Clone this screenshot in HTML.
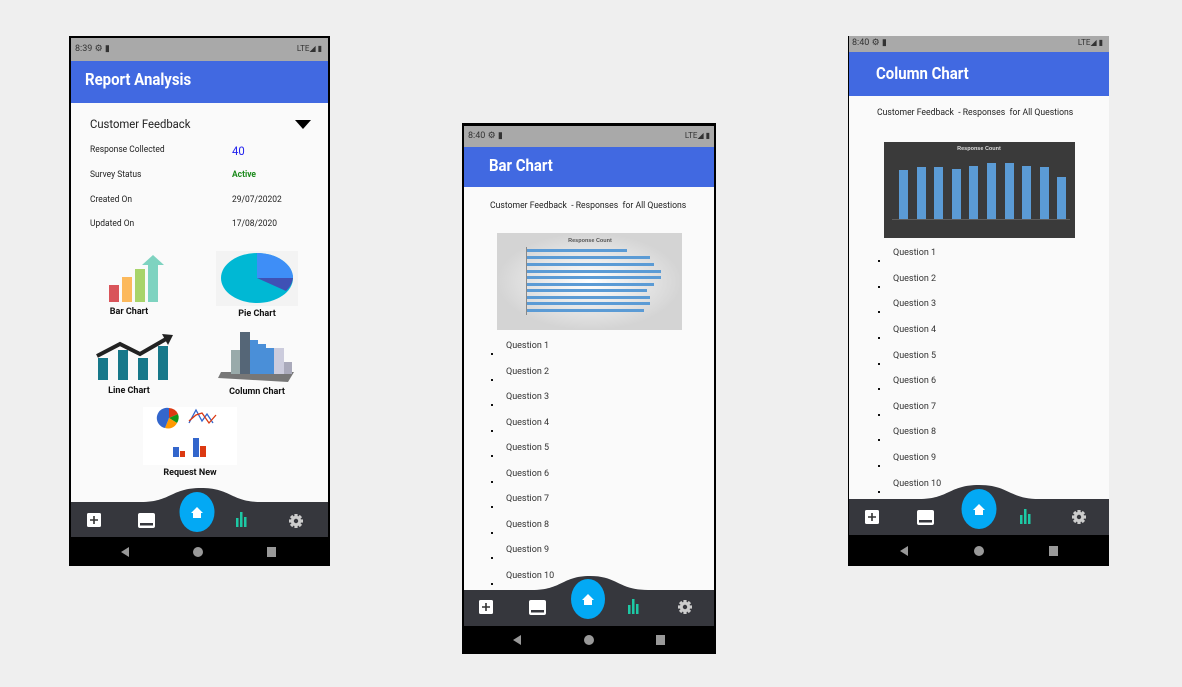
<!DOCTYPE html>
<html><head><meta charset="utf-8"><style>
*{margin:0;padding:0;box-sizing:border-box}
body{width:1182px;height:687px;background:#efefef;position:relative;overflow:hidden;font-family:"Roboto","Liberation Sans",sans-serif}
.ph{position:absolute;background:#fafafa;overflow:hidden}
.a{position:absolute}
.st{position:absolute;left:0;right:0;background:#a9a9a9;color:#333;font-size:9px}
.hd{position:absolute;left:0;right:0;background:#4169e1;color:#fff;font-weight:bold;font-size:17px}
.hd span{display:inline-block;transform:scaleX(0.88);transform-origin:left}
.sys{position:absolute;left:0;right:0;bottom:0;background:#000}
.t{position:absolute;font-size:9px;color:#222;white-space:nowrap;transform:scaleX(0.94);transform-origin:left}
.q{position:absolute;font-size:9px;color:#333;white-space:nowrap}
.q:before{content:"";position:absolute;left:-15px;top:12px;width:2px;height:2px;background:#111}
.lbl{position:absolute;font-size:9px;font-weight:bold;color:#111;transform:translateX(-50%);white-space:nowrap}
</style></head><body>

<svg width="0" height="0" style="position:absolute"><defs>
<g id="gear"><g fill="#ccc"><rect x="-1.6" y="-7" width="3.2" height="14"/><rect x="-1.6" y="-7" width="3.2" height="14" transform="rotate(45)"/><rect x="-1.6" y="-7" width="3.2" height="14" transform="rotate(90)"/><rect x="-1.6" y="-7" width="3.2" height="14" transform="rotate(135)"/></g><circle r="5.2" fill="#ccc"/><circle r="2.2" fill="#36373d"/></g>
</defs></svg>

<!-- Phone 1 -->
<div class="ph" style="left:69px;top:36px;width:261px;height:530px;border:2px solid #000;border-bottom:none;">
 <div class="st" style="top:0;height:23px;"><span class="a" style="left:4px;top:6px">8:39 ⚙ ▮</span><span class="a" style="right:6px;top:6px;font-size:8px">LTE◢ ▮</span></div>
 <div class="hd" style="top:23px;height:42px;padding:9px 0 0 14px;"><span>Report Analysis</span></div>
 <div class="t" style="left:19px;top:79px;font-size:12px;color:#222">Customer Feedback</div>
 <div class="a" style="left:224px;top:82px;width:0;height:0;border-left:8px solid transparent;border-right:8px solid transparent;border-top:9px solid #000"></div>
 <div class="t" style="left:19px;top:107px">Response Collected</div><div class="t" style="left:161px;top:106px;color:#2222ee;font-size:12px">40</div>
 <div class="t" style="left:19px;top:132px">Survey Status</div><div class="t" style="left:161px;top:132px;color:#1a8a1a;font-weight:bold">Active</div>
 <div class="t" style="left:19px;top:157px">Created On</div><div class="t" style="left:161px;top:157px">29/07/20202</div>
 <div class="t" style="left:19px;top:181px">Updated On</div><div class="t" style="left:161px;top:181px">17/08/2020</div>
 <svg class="a" style="left:36px;top:217px" width="66" height="48"><rect x="2" y="30" width="10" height="17" fill="#d9545a"/><rect x="15" y="22" width="10" height="25" fill="#fcb95c"/><rect x="28" y="14" width="10" height="33" fill="#a8d46a"/><rect x="41" y="10" width="10" height="37" fill="#7ed3c0"/><polygon points="35,10 46,0 57,10" fill="#7ed3c0"/></svg>
 <div class="lbl" style="left:58px;top:269px">Bar Chart</div>
 <svg class="a" style="left:145px;top:213px" width="82" height="55"><rect width="82" height="55" fill="#f3f3f3"/><ellipse cx="41" cy="27" rx="36" ry="25" fill="#00b8d4"/><path d="M41 27 L41 2 A36 25 0 0 1 77 27 Z" fill="#3e8ef7"/><path d="M41 27 L77 27 A36 25 0 0 1 70 40 Z" fill="#3f51b5"/></svg>
 <div class="lbl" style="left:186px;top:271px">Pie Chart</div>
 <svg class="a" style="left:25px;top:296px" width="78" height="48"><rect x="2" y="24" width="10" height="22" fill="#17788a"/><rect x="22" y="16" width="10" height="30" fill="#17788a"/><rect x="42" y="24" width="10" height="22" fill="#17788a"/><rect x="62" y="12" width="10" height="34" fill="#17788a"/><polyline points="1,22 24,10 44,20 70,5" fill="none" stroke="#222" stroke-width="4"/><polygon points="66,0 77,1 72,11" fill="#222"/></svg>
 <div class="lbl" style="left:58px;top:348px">Line Chart</div>
 <svg class="a" style="left:145px;top:292px" width="82" height="55"><polygon points="5,42 78,42 72,52 2,48" fill="#777"/><rect x="15" y="20" width="10" height="24" fill="#9aa"/><rect x="24" y="2" width="10" height="42" fill="#567"/><rect x="34" y="10" width="8" height="34" fill="#4a8fd8"/><rect x="42" y="14" width="8" height="30" fill="#4a8fd8"/><rect x="50" y="18" width="8" height="26" fill="#4a8fd8"/><rect x="58" y="18" width="10" height="26" fill="#ccd"/><rect x="68" y="32" width="8" height="12" fill="#aab"/></svg>
 <div class="lbl" style="left:186px;top:349px">Column Chart</div>
 <svg class="a" style="left:72px;top:369px" width="94" height="58"><rect width="94" height="58" fill="#fff"/><path d="M26 11 L26 1 A10 10 0 0 1 35 7 Z" fill="#dc3912"/><path d="M26 11 L35 7 A10 10 0 0 1 34 16 Z" fill="#109618"/><path d="M26 11 L34 16 A10 10 0 0 1 22 21 Z" fill="#ff9900"/><path d="M26 11 L22 21 A10 10 0 0 1 26 1 Z" fill="#3366cc"/><polyline points="46,16 53,3 59,14 64,7 70,16" fill="none" stroke="#3366cc" stroke-width="1.3"/><polyline points="46,14 53,8 59,6 66,16 73,8" fill="none" stroke="#dc3912" stroke-width="1.3"/><rect x="30" y="40" width="6" height="10" fill="#3366cc"/><rect x="37" y="44" width="5" height="6" fill="#dc3912"/><rect x="50" y="31" width="6" height="19" fill="#3366cc"/><rect x="57" y="39" width="6" height="11" fill="#dc3912"/></svg>
 <div class="lbl" style="left:119px;top:430px">Request New</div>
 <svg class="a" style="left:0;top:450px" width="261" height="52"><path d="M70 14 C100 14 100 0 130 0 C160 0 160 14 190 14 L261 14 L261 52 L0 52 L0 14 Z" fill="#36373d"/><ellipse cx="126" cy="24" rx="17.5" ry="20" fill="#03a9f4"/><path d="M120 25 L126 19 L132 25 L130 25 L130 30 L122 30 L122 25Z" fill="#fff"/><rect x="16" y="25" width="14" height="14" rx="1.5" fill="#fff"/><path d="M23 28v8M19 32h8" stroke="#333" stroke-width="1.6"/><rect x="67" y="25" width="17" height="15" rx="2" fill="#fff"/><rect x="69" y="35" width="13" height="2.5" fill="#36373d"/><rect x="165" y="30" width="2.5" height="9" fill="#1dc9a5"/><rect x="169" y="24" width="2.5" height="15" fill="#1dc9a5"/><rect x="173" y="29" width="2.5" height="10" fill="#1dc9a5"/><use href="#gear" x="225" y="33"/></svg>
 <div class="sys" style="height:29px"><span class="a" style="left:50px;top:10px;width:0;height:0;border-top:5px solid transparent;border-bottom:5px solid transparent;border-right:8px solid #999"></span><span class="a" style="left:122px;top:10px;width:10px;height:10px;border-radius:50%;background:#999"></span><span class="a" style="left:196px;top:10px;width:9px;height:10px;background:#999"></span></div>
</div>

<!-- Phone 2 -->
<div class="ph" style="left:462px;top:123px;width:254px;height:531px;border:2px solid #000;border-top:3px solid #000;border-bottom:none;">
 <div class="st" style="top:0;height:21px;"><span class="a" style="left:4px;top:5px">8:40 ⚙ ▮</span><span class="a" style="right:4px;top:5px;font-size:8px">LTE◢ ▮</span></div>
 <div class="hd" style="top:21px;height:40px;padding:9px 0 0 25px;"><span>Bar Chart</span></div>
 <div class="t" style="left:26px;top:75px;transform:scaleX(0.96)">Customer Feedback &nbsp;- Responses &nbsp;for All Questions</div>
 <svg class="a" style="left:33px;top:107px" width="185" height="97"><defs><radialGradient id="g1"><stop offset="0" stop-color="#fff"/><stop offset="1" stop-color="#d4d4d4"/></radialGradient></defs><rect width="185" height="97" fill="url(#g1)"/><text x="93" y="9" font-size="5.5" font-weight="bold" text-anchor="middle" fill="#555" font-family="Liberation Sans">Response Count</text><g fill="#5b9bd5"><rect x="30" y="16" width="100" height="3"/><rect x="30" y="23" width="123" height="3"/><rect x="30" y="30" width="127" height="3"/><rect x="30" y="37" width="134" height="3"/><rect x="30" y="43" width="134" height="3"/><rect x="30" y="50" width="127" height="3"/><rect x="30" y="56" width="120" height="3"/><rect x="30" y="63" width="123" height="3"/><rect x="30" y="69" width="123" height="3"/><rect x="30" y="76" width="117" height="3"/></g><rect x="29" y="14" width="1" height="68" fill="#888"/></svg>
 <div class="q" style="left:42px;top:215px">Question 1</div><div class="q" style="left:42px;top:241px">Question 2</div><div class="q" style="left:42px;top:266px">Question 3</div><div class="q" style="left:42px;top:292px">Question 4</div><div class="q" style="left:42px;top:317px">Question 5</div><div class="q" style="left:42px;top:343px">Question 6</div><div class="q" style="left:42px;top:368px">Question 7</div><div class="q" style="left:42px;top:394px">Question 8</div><div class="q" style="left:42px;top:419px">Question 9</div><div class="q" style="left:42px;top:445px">Question 10</div>
 <svg class="a" style="left:0;top:450px" width="254" height="52"><path d="M68 14 C98 14 98 0 126 0 C154 0 154 14 184 14 L254 14 L254 52 L0 52 L0 14 Z" fill="#36373d"/><ellipse cx="124" cy="23" rx="17" ry="20" fill="#03a9f4"/><path d="M118 24 L124 18 L130 24 L128 24 L128 29 L120 29 L120 24Z" fill="#fff"/><rect x="15" y="24" width="14" height="14" rx="1.5" fill="#fff"/><path d="M22 27v8M18 31h8" stroke="#333" stroke-width="1.6"/><rect x="65" y="24" width="17" height="15" rx="2" fill="#fff"/><rect x="67" y="34" width="13" height="2.5" fill="#36373d"/><rect x="164" y="29" width="2.5" height="9" fill="#1dc9a5"/><rect x="168" y="23" width="2.5" height="15" fill="#1dc9a5"/><rect x="172" y="28" width="2.5" height="10" fill="#1dc9a5"/><use href="#gear" x="221" y="31"/></svg>
 <div class="sys" style="height:28px"><span class="a" style="left:49px;top:9px;width:0;height:0;border-top:5px solid transparent;border-bottom:5px solid transparent;border-right:8px solid #999"></span><span class="a" style="left:120px;top:9px;width:10px;height:10px;border-radius:50%;background:#999"></span><span class="a" style="left:192px;top:9px;width:9px;height:10px;background:#999"></span></div>
</div>

<!-- Phone 3 -->
<div class="ph" style="left:848px;top:36px;width:261px;height:530px;border-left:1px solid #000;">
 <div class="st" style="top:0;height:16px;"><span class="a" style="left:3px;top:2px">8:40 ⚙ ▮</span><span class="a" style="right:6px;top:2px;font-size:8px">LTE◢ ▮</span></div>
 <div class="hd" style="top:16px;height:44px;padding:12px 0 0 27px;"><span>Column Chart</span></div>
 <div class="t" style="left:28px;top:72px;transform:scaleX(0.96)">Customer Feedback &nbsp;- Responses &nbsp;for All Questions</div>
 <svg class="a" style="left:35px;top:106px" width="191" height="96"><rect width="191" height="96" fill="#3a3a3a"/><text x="95" y="8" font-size="5.5" font-weight="bold" text-anchor="middle" fill="#ddd" font-family="Liberation Sans">Response Count</text><g fill="#5b9bd5"><rect x="15" y="28" width="9" height="49"/><rect x="33" y="25" width="9" height="52"/><rect x="50" y="25" width="9" height="52"/><rect x="68" y="27" width="9" height="50"/><rect x="85" y="24" width="9" height="53"/><rect x="103" y="21" width="9" height="56"/><rect x="121" y="21" width="9" height="56"/><rect x="138" y="24" width="9" height="53"/><rect x="156" y="25" width="9" height="52"/><rect x="173" y="35" width="9" height="42"/></g><rect x="8" y="77" width="178" height="0.6" fill="#777"/></svg>
 <div class="q" style="left:44px;top:212px">Question 1</div><div class="q" style="left:44px;top:238px">Question 2</div><div class="q" style="left:44px;top:263px">Question 3</div><div class="q" style="left:44px;top:289px">Question 4</div><div class="q" style="left:44px;top:315px">Question 5</div><div class="q" style="left:44px;top:340px">Question 6</div><div class="q" style="left:44px;top:366px">Question 7</div><div class="q" style="left:44px;top:391px">Question 8</div><div class="q" style="left:44px;top:417px">Question 9</div><div class="q" style="left:44px;top:443px">Question 10</div>
 <svg class="a" style="left:0;top:449px" width="261" height="52"><path d="M70 14 C100 14 100 0 130 0 C160 0 160 14 190 14 L261 14 L261 52 L0 52 L0 14 Z" fill="#36373d"/><ellipse cx="130" cy="24" rx="17.5" ry="20" fill="#03a9f4"/><path d="M124 25 L130 19 L136 25 L134 25 L134 30 L126 30 L126 25Z" fill="#fff"/><rect x="16" y="25" width="14" height="14" rx="1.5" fill="#fff"/><path d="M23 28v8M19 32h8" stroke="#333" stroke-width="1.6"/><rect x="68" y="25" width="17" height="15" rx="2" fill="#fff"/><rect x="70" y="35" width="13" height="2.5" fill="#36373d"/><rect x="171" y="30" width="2.5" height="9" fill="#1dc9a5"/><rect x="175" y="24" width="2.5" height="15" fill="#1dc9a5"/><rect x="179" y="29" width="2.5" height="10" fill="#1dc9a5"/><use href="#gear" x="230" y="32"/></svg>
 <div class="sys" style="height:31px"><span class="a" style="left:51px;top:11px;width:0;height:0;border-top:5px solid transparent;border-bottom:5px solid transparent;border-right:8px solid #999"></span><span class="a" style="left:125px;top:11px;width:10px;height:10px;border-radius:50%;background:#999"></span><span class="a" style="left:200px;top:11px;width:9px;height:10px;background:#999"></span></div>
</div>

</body></html>
